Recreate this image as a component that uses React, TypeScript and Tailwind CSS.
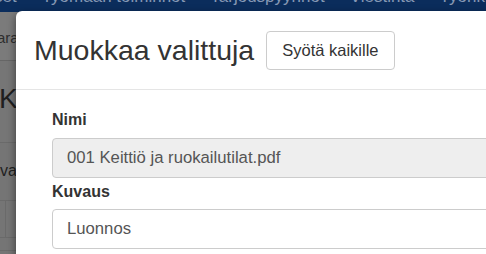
import React from 'react';

const navItems = ['Asetukset', 'Työmaan toiminnot', 'Tarjouspyynnöt', 'Viestintä', 'Työnkulku'];

function BackgroundPage() {
  return (
    <div className="flex flex-col h-full">
      {/* top navigation, cut off by the window */}
      <div className="h-[12px] bg-[#0b2d5c] overflow-hidden shrink-0">
        <div className="flex gap-[25px] -ml-[58px] mt-[-11px] text-[17px] leading-[16px] text-[#8598b4] whitespace-nowrap">
          {navItems.map((item) => (
            <span key={item}>{item}</span>
          ))}
        </div>
      </div>

      {/* breadcrumb */}
      <div className="h-[49px] bg-[#7b7b7b] border-b border-[#666] flex items-center overflow-hidden shrink-0">
        <span className="text-[15px] text-[#2e2e2e] -ml-[3px] mt-[4px] whitespace-nowrap">ara</span>
      </div>

      {/* page heading */}
      <div className="h-[82px] bg-[#767676] border-b border-[#6a6a6a] flex items-center overflow-hidden shrink-0">
        <span className="text-[28px] text-[#1f1f1f] -ml-[1px] mb-[6px] whitespace-nowrap">Kuvat</span>
      </div>

      {/* page form */}
      <div className="flex-1 bg-[#757575] pt-[16px] overflow-hidden">
        <span className="text-[16px] text-[#222] whitespace-nowrap">vaus</span>
        <div className="mt-[17px] border-t border-[#6a6a6a]">
          <div className="ml-[5px] h-[36px] border-l border-[#6a6a6a]" />
          <div className="border-t border-[#6a6a6a] h-[13px]" />
          <div className="border-t border-[#6a6a6a]" />
        </div>
      </div>
    </div>
  );
}

export default function App() {
  return (
    <div
      className="relative w-[486px] h-[254px] overflow-hidden bg-[#777]"
      style={{ fontFamily: '"Liberation Sans", Arial, sans-serif' }}
    >
      <BackgroundPage />

      {/* modal dialog */}
      <div className="absolute left-[16px] top-[11px] w-[560px] h-[320px] bg-white rounded-[6px] shadow-[0_3px_9px_rgba(0,0,0,0.5)]">
        <div className="h-[79px] border-b border-[#e5e5e5] flex items-center gap-[12px] pl-[18px]">
          <h4 className="text-[28.5px] text-[#333] leading-none">Muokkaa valittuja</h4>
          <button className="h-[39px] px-[15px] border border-[#ccc] rounded-[4px] bg-white text-[16.5px] text-[#333]">
            Syötä kaikille
          </button>
        </div>

        <div className="pt-[18px] px-[36px]">
          <label className="block text-[16px] leading-[23px] font-bold text-[#333] mb-[7px]">Nimi</label>
          <div className="h-[40px] border border-[#ccc] rounded-[4px] bg-[#eee] flex items-center px-[14px] text-[16.7px] text-[#555] mb-[2px]">
            001 Keittiö ja ruokailutilat.pdf
          </div>
          <label className="block text-[16px] leading-[23px] font-bold text-[#333] mb-[6px]">Kuvaus</label>
          <div className="h-[40px] border border-[#ccc] rounded-[4px] bg-white flex items-center px-[14px] text-[16.7px] text-[#555]">
            Luonnos
          </div>
        </div>
      </div>
    </div>
  );
}
